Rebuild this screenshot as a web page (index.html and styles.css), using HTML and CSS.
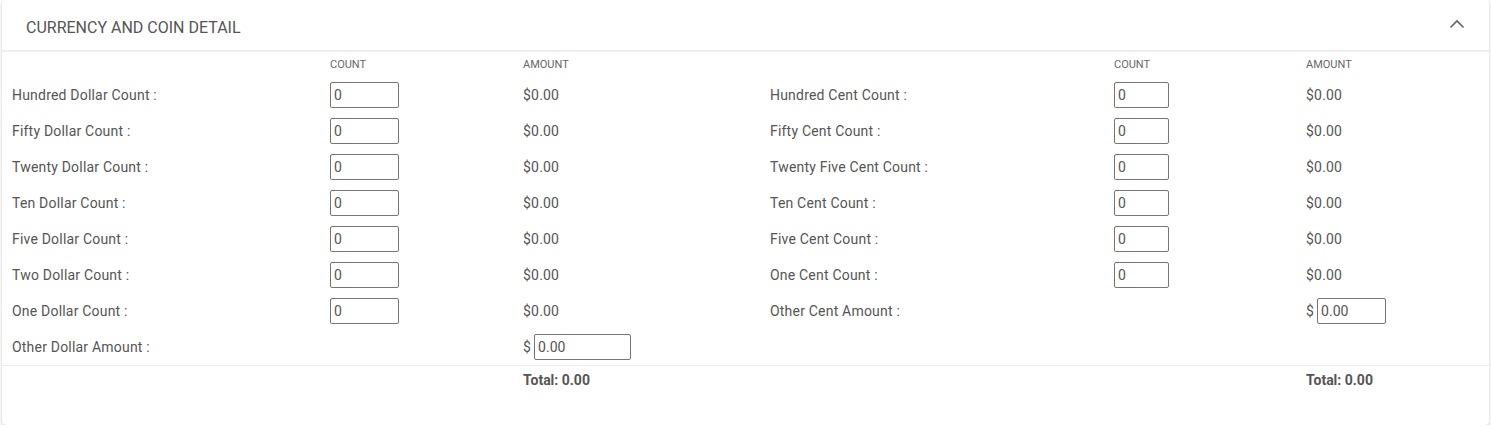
FILE: index.html
```html
<!DOCTYPE html>
<html lang="en">
<head>
    <meta charset="UTF-8">
    <meta name="viewport" content="width=device-width, initial-scale=1.0">
    <title>Currency and Coin Detail</title>
    <link rel="stylesheet" href="styles.css">
</head>
<body>
    <div class="card">
        <div class="card-header">
            <span class="card-title">CURRENCY AND COIN DETAIL</span>
            <svg class="chevron" width="16" height="10" viewBox="0 0 16 10">
                <path d="M1.5 8.5 L8 2 L14.5 8.5" fill="none" stroke="#5a6470" stroke-width="1.6"/>
            </svg>
        </div>
        <div class="card-body">
            <div class="grid">
                <div></div>
                <div class="col-head">COUNT</div>
                <div class="col-head">AMOUNT</div>
                <div></div>
                <div class="col-head">COUNT</div>
                <div class="col-head">AMOUNT</div>

                <div class="label">Hundred Dollar Count :</div>
                <div><input class="count" type="text" value="0"></div>
                <div class="amount">$0.00</div>
                <div class="label">Hundred Cent Count :</div>
                <div><input class="count small" type="text" value="0"></div>
                <div class="amount">$0.00</div>

                <div class="label">Fifty Dollar Count :</div>
                <div><input class="count" type="text" value="0"></div>
                <div class="amount">$0.00</div>
                <div class="label">Fifty Cent Count :</div>
                <div><input class="count small" type="text" value="0"></div>
                <div class="amount">$0.00</div>

                <div class="label">Twenty Dollar Count :</div>
                <div><input class="count" type="text" value="0"></div>
                <div class="amount">$0.00</div>
                <div class="label">Twenty Five Cent Count :</div>
                <div><input class="count small" type="text" value="0"></div>
                <div class="amount">$0.00</div>

                <div class="label">Ten Dollar Count :</div>
                <div><input class="count" type="text" value="0"></div>
                <div class="amount">$0.00</div>
                <div class="label">Ten Cent Count :</div>
                <div><input class="count small" type="text" value="0"></div>
                <div class="amount">$0.00</div>

                <div class="label">Five Dollar Count :</div>
                <div><input class="count" type="text" value="0"></div>
                <div class="amount">$0.00</div>
                <div class="label">Five Cent Count :</div>
                <div><input class="count small" type="text" value="0"></div>
                <div class="amount">$0.00</div>

                <div class="label">Two Dollar Count :</div>
                <div><input class="count" type="text" value="0"></div>
                <div class="amount">$0.00</div>
                <div class="label">One Cent Count :</div>
                <div><input class="count small" type="text" value="0"></div>
                <div class="amount">$0.00</div>

                <div class="label">One Dollar Count :</div>
                <div><input class="count" type="text" value="0"></div>
                <div class="amount">$0.00</div>
                <div class="label">Other Cent Amount :</div>
                <div></div>
                <div class="amount">$ <input class="other" type="text" value="0.00"></div>

                <div class="label">Other Dollar Amount :</div>
                <div></div>
                <div class="amount">$ <input class="other wide" type="text" value="0.00"></div>
                <div></div>
                <div></div>
                <div></div>
            </div>
        </div>
        <div class="card-footer">
            <div class="grid totals">
                <div></div>
                <div></div>
                <div class="total">Total: 0.00</div>
                <div></div>
                <div></div>
                <div class="total">Total: 0.00</div>
            </div>
        </div>
    </div>
</body>
</html>
```

FILE: styles.css
```css
html, body {
    margin: 0;
    padding: 0;
    background-color: #fff;
}

body {
    font-family: Roboto, "Liberation Sans", Arial, sans-serif;
    color: #555;
    font-size: 14px;
}

.card {
    margin: -1px 2px 0 2px;
    background-color: #fff;
    border-radius: 4px;
    box-shadow: 0 1px 3px rgba(0, 0, 0, 0.25);
    height: 426px;
    box-sizing: border-box;
}

.card-header {
    height: 53px;
    box-sizing: border-box;
    padding: 4px 24px 0 24px;
    display: flex;
    align-items: center;
    justify-content: space-between;
    border-bottom: 2px solid #eeeeee;
}

.card-title {
    font-size: 16px;
    color: #555;
    margin-top: 1px;
}

.chevron {
    margin-top: -6px;
}

.card-body {
    padding: 0 10px;
}

.grid {
    display: grid;
    grid-template-columns: 318px 193px 247px 344px 192px 1fr;
    grid-template-rows: 25px repeat(8, 36px);
    align-items: center;
}

.col-head {
    font-size: 11px;
    color: #666;
    align-self: end;
    padding-bottom: 6px;
}

.label,
.amount {
    font-size: 14px;
    color: #555;
    letter-spacing: 0.2px;
}

.amount {
    display: flex;
    align-items: center;
    gap: 3px;
}

input {
    font-family: Roboto, "Liberation Sans", Arial, sans-serif;
    font-size: 14px;
    color: #555;
    height: 26px;
    box-sizing: border-box;
    border: 1px solid #767676;
    border-radius: 2px;
    padding: 1px 3px;
    margin: 0;
    display: block;
}

.count {
    width: 69px;
}

.count.small {
    width: 55px;
}

.other {
    width: 69px;
}

.other.wide {
    width: 97px;
}

.card-footer {
    border-top: 1px solid #eeeeee;
    padding: 0 10px;
}

.totals {
    grid-template-rows: 28px;
}

.total {
    font-weight: bold;
    font-size: 14px;
    color: #555;
}
```
